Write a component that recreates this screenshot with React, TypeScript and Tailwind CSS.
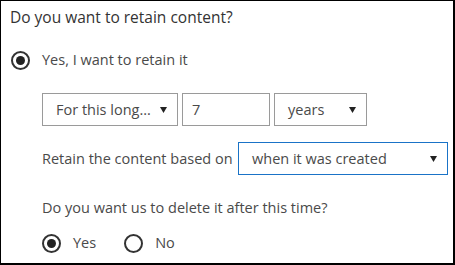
import React from "react";

function Caret() {
    return (
        <svg width="7" height="6" viewBox="0 0 7 6" className="shrink-0">
            <path d="M0 0 H7 L3.5 6 Z" fill="#222" />
        </svg>
    );
}

function Radio({ checked }: { checked?: boolean }) {
    return (
        <span className="flex h-[19px] w-[19px] shrink-0 items-center justify-center rounded-full border-2 border-[#333]">
            {checked && <span className="h-[9px] w-[9px] rounded-full bg-[#222]" />}
        </span>
    );
}

function Select({ label, width, blue }: { label: string; width: string; blue?: boolean }) {
    return (
        <div
            className={`flex h-[33px] items-center justify-between border pl-[13px] pr-[10px] ${width} ${
                blue ? "border-[#1a73c7]" : "border-[#9a9a9a]"
            }`}
        >
            <span>{label}</span>
            <Caret />
        </div>
    );
}

export default function App() {
    return (
        <div
            className="h-[265px] w-[455px] border-t border-l border-r-2 border-b-2 border-black bg-white text-[14.5px] text-[#4a4a4a]"
            style={{ fontFamily: '"Open Sans", "Noto Sans", sans-serif' }}
        >
            <h1 className="ml-[9px] mt-[4px] h-[24px] text-[15.5px] leading-[24px] text-[#333]">
                Do you want to retain content?
            </h1>

            <label className="ml-[10px] mt-[21px] flex h-[20px] items-center gap-[12px]">
                <Radio checked />
                <span>Yes, I want to retain it</span>
            </label>

            <div className="ml-[41px] flex flex-col">
                <div className="mt-[23px] flex gap-[4px]">
                    <Select label="For this long..." width="w-[136px]" />
                    <div className="flex h-[33px] w-[88px] items-center border border-[#9a9a9a] pl-[9px]">7</div>
                    <Select label="years" width="w-[93px]" />
                </div>

                <div className="mt-[16px] flex items-center gap-[4px]">
                    <span className="w-[192px]">Retain the content based on</span>
                    <Select label="when it was created" width="w-[210px]" blue />
                </div>

                <p className="mt-[23px] h-[20px] leading-[20px]">Do you want us to delete it after this time?</p>

                <div className="mt-[15px] flex h-[20px] items-center">
                    <label className="flex items-center gap-[12px]">
                        <Radio checked />
                        <span>Yes</span>
                    </label>
                    <label className="ml-[28px] flex items-center gap-[12px]">
                        <Radio />
                        <span>No</span>
                    </label>
                </div>
            </div>
        </div>
    );
}
